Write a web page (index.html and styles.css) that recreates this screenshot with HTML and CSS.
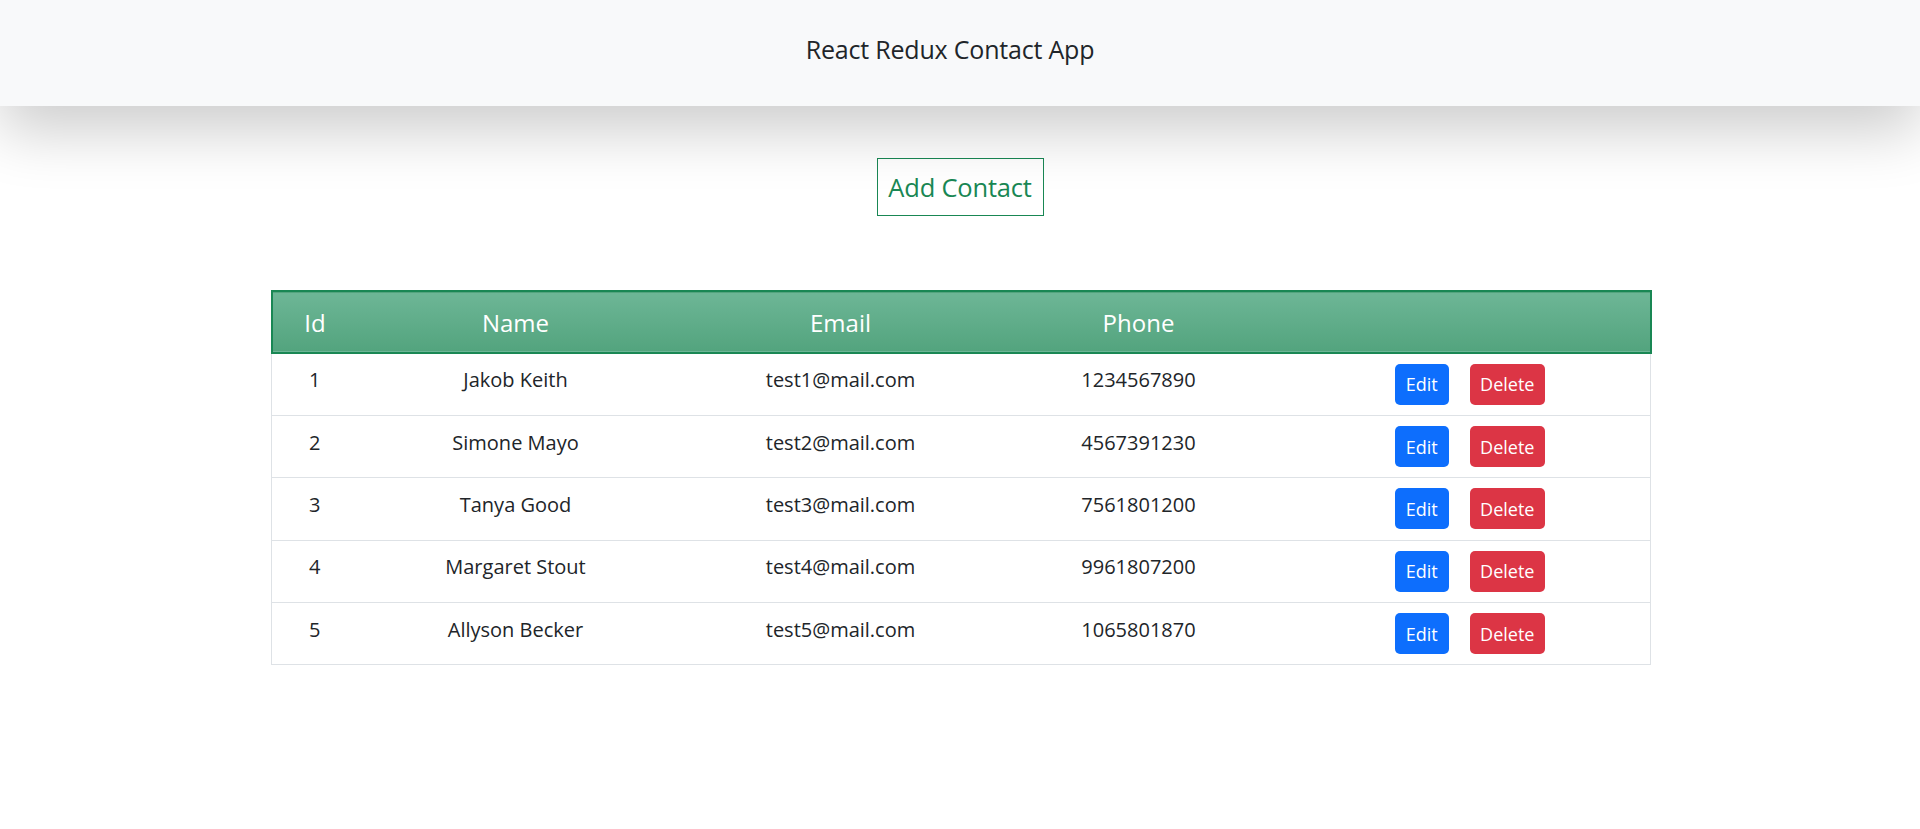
FILE: index.html
```html
<!DOCTYPE html>
<html lang="en">
<head>
<meta charset="utf-8">
<title>React Redux Contact App</title>
<link rel="stylesheet" href="styles.css">
</head>
<body>
<header class="navbar">
  <span class="brand">React Redux Contact App</span>
</header>
<main class="container">
  <div class="add-row">
    <button class="btn-add">Add Contact</button>
  </div>
  <table class="contacts">
    <colgroup>
      <col class="c-id"><col class="c-name"><col class="c-email"><col class="c-phone"><col class="c-act">
    </colgroup>
    <thead>
      <tr><th>Id</th><th>Name</th><th>Email</th><th>Phone</th><th></th></tr>
    </thead>
    <tbody>
      <tr><td>1</td><td>Jakob Keith</td><td>test1@mail.com</td><td>1234567890</td><td class="actions"><div class="btns"><button class="btn edit">Edit</button><button class="btn del">Delete</button></div></td></tr>
      <tr><td>2</td><td>Simone Mayo</td><td>test2@mail.com</td><td>4567391230</td><td class="actions"><div class="btns"><button class="btn edit">Edit</button><button class="btn del">Delete</button></div></td></tr>
      <tr><td>3</td><td>Tanya Good</td><td>test3@mail.com</td><td>7561801200</td><td class="actions"><div class="btns"><button class="btn edit">Edit</button><button class="btn del">Delete</button></div></td></tr>
      <tr><td>4</td><td>Margaret Stout</td><td>test4@mail.com</td><td>9961807200</td><td class="actions"><div class="btns"><button class="btn edit">Edit</button><button class="btn del">Delete</button></div></td></tr>
      <tr><td>5</td><td>Allyson Becker</td><td>test5@mail.com</td><td>1065801870</td><td class="actions"><div class="btns"><button class="btn edit">Edit</button><button class="btn del">Delete</button></div></td></tr>
    </tbody>
  </table>
</main>
</body>
</html>
```

FILE: styles.css
```css
* { box-sizing: border-box; }
html, body { margin: 0; padding: 0; background: #fff; }
body {
  font-family: "Segoe UI", "Open Sans", "Noto Sans", sans-serif;
  color: #212529;
}
.navbar {
  height: 106px;
  padding-bottom: 8px;
  padding-right: 20px;
  background: #f8f9fa;
  display: flex;
  align-items: center;
  justify-content: center;
  box-shadow: 0 25px 60px rgba(0, 0, 0, 0.2);
  position: relative;
  z-index: 1;
}
.brand {
  font-size: 25px;
  color: #212529;
  letter-spacing: -0.2px;
}
.container {
  width: 1379px;
  margin: 0 auto;
  padding-top: 52px;
}
.add-row {
  display: flex;
  justify-content: center;
  margin-bottom: 74px;
}
.btn-add {
  font-family: inherit;
  width: 167px;
  height: 58px;
  background: transparent;
  border: 1px solid #198754;
  color: #198754;
  font-size: 25.5px;
  padding: 0;
  letter-spacing: -0.2px;
}
.contacts {
  width: 1379px;
  border-collapse: collapse;
  table-layout: fixed;
  border: 1px solid #dee2e6;
}
.c-id { width: 86px; }
.c-name { width: 316px; }
.c-email { width: 334px; }
.c-phone { width: 262px; }
.c-act { width: 381px; }
.contacts thead tr {
  background: linear-gradient(#6db696, #53a47e);
  border: 2px solid #198754;
}
.contacts th {
  height: 62px;
  color: #fff;
  font-weight: 400;
  font-size: 24px;
  text-align: center;
  padding: 0;
}
.contacts td {
  height: 62.4px;
  text-align: center;
  font-size: 20px;
  padding: 0 0 9px;
  border-bottom: 1px solid #dee2e6;
  color: #212529;
}
.contacts td.actions { padding: 0 0 0 20px; }
.btns {
  display: inline-flex;
  gap: 21px;
  vertical-align: middle;
}
.btn {
  font-family: inherit;
  height: 41px;
  border: none;
  border-radius: 5px;
  color: #fff;
  font-size: 18px;
  padding: 0;
}
.btn.edit { width: 54px; background: #0d6efd; }
.btn.del { width: 75px; background: #dc3545; }
```
